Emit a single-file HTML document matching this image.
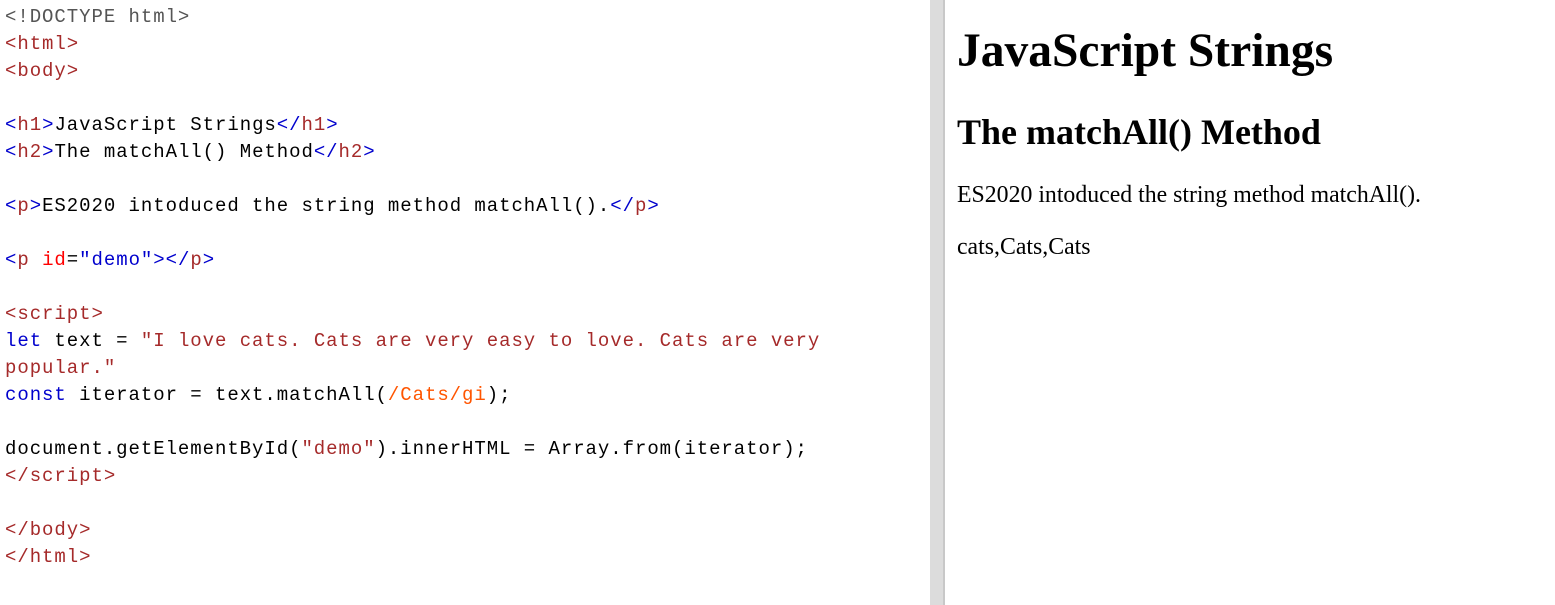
<!DOCTYPE html>
<html><head><style>
body{margin:0;width:1555px;height:605px;overflow:hidden;background:#fff;position:relative}
#code{position:absolute;left:5px;top:4px;font-family:"Liberation Mono",monospace;font-size:19px;letter-spacing:0.95px;line-height:27px;white-space:pre;color:#000}
.t{color:#a52a2a}.b{color:#0000cd}.a{color:#f00}.s{color:#a52a2a}.k{color:#0000cd}.r{color:#ff5500}.g{color:#555}
#div{position:absolute;left:930px;top:0;width:13px;height:605px;background:#dcdcdc;border-right:2px solid #c8c8c8}
#out{position:absolute;left:957px;top:0;font-family:"Liberation Serif",serif;color:#000}
h1{font-size:47.5px;margin:0;position:absolute;top:24px;white-space:nowrap}
h2{font-size:36px;margin:0;position:absolute;top:111px;white-space:nowrap}
p{font-size:23.8px;margin:0;position:absolute;white-space:nowrap}
</style></head><body>
<div id="code"><span class="g">&lt;!DOCTYPE html&gt;</span>
<span class="t">&lt;html&gt;</span>
<span class="t">&lt;body&gt;</span>

<span class="b">&lt;</span><span class="t">h1</span><span class="b">&gt;</span>JavaScript Strings<span class="b">&lt;/</span><span class="t">h1</span><span class="b">&gt;</span>
<span class="b">&lt;</span><span class="t">h2</span><span class="b">&gt;</span>The matchAll() Method<span class="b">&lt;/</span><span class="t">h2</span><span class="b">&gt;</span>

<span class="b">&lt;</span><span class="t">p</span><span class="b">&gt;</span>ES2020 intoduced the string method matchAll().<span class="b">&lt;/</span><span class="t">p</span><span class="b">&gt;</span>

<span class="b">&lt;</span><span class="t">p</span> <span class="a">id</span>=<span class="b">"demo"</span><span class="b">&gt;&lt;/</span><span class="t">p</span><span class="b">&gt;</span>

<span class="t">&lt;script&gt;</span>
<span class="k">let</span> text = <span class="s">"I love cats. Cats are very easy to love. Cats are very</span>
<span class="s">popular."</span>
<span class="k">const</span> iterator = text.matchAll(<span class="r">/Cats/gi</span>);

document.getElementById(<span class="s">"demo"</span>).innerHTML = Array.from(iterator);
<span class="t">&lt;/script&gt;</span>

<span class="t">&lt;/body&gt;</span>
<span class="t">&lt;/html&gt;</span></div>
<div id="div"></div>
<div id="out">
<h1>JavaScript Strings</h1>
<h2>The matchAll() Method</h2>
<p style="top:182px">ES2020 intoduced the string method matchAll().</p>
<p style="top:234px">cats,Cats,Cats</p>
</div>
</body></html>
